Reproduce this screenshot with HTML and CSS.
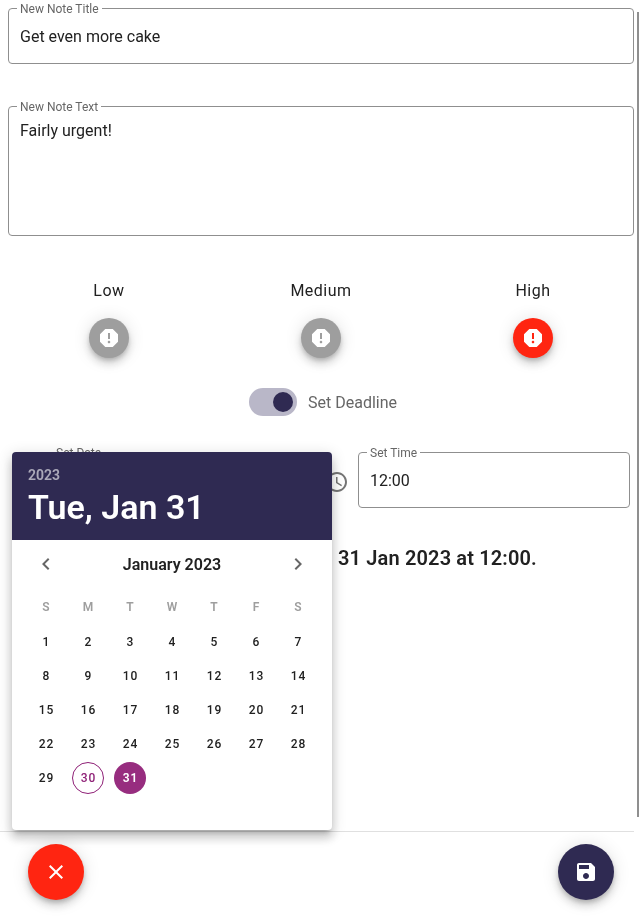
FILE: index.html
```html
<!DOCTYPE html>
<html lang="en">
<head>
<meta charset="utf-8">
<title>New Note</title>
<link rel="stylesheet" href="styles.css">
</head>
<body>
<div class="page">
  <main class="content">
    <div class="field field-title">
      <span class="field-label">New Note Title</span>
      <span class="field-value">Get even more cake</span>
    </div>
    <div class="field field-text">
      <span class="field-label">New Note Text</span>
      <span class="field-value">Fairly urgent!</span>
    </div>

    <div class="priorities">
      <div class="priority">
        <span class="priority-label">Low</span>
        <span class="priority-btn"><svg class="icon-report" viewBox="0 0 24 24"><path d="M15.73 3H8.27L3 8.27v7.46L8.27 21h7.46L21 15.73V8.27L15.73 3zM12 17.3c-.72 0-1.3-.58-1.3-1.3 0-.72.58-1.3 1.3-1.3.72 0 1.3.58 1.3 1.3 0 .72-.58 1.3-1.3 1.3zm1-4.3h-2V7h2v6z"/></svg></span>
      </div>
      <div class="priority">
        <span class="priority-label">Medium</span>
        <span class="priority-btn"><svg class="icon-report" viewBox="0 0 24 24"><path d="M15.73 3H8.27L3 8.27v7.46L8.27 21h7.46L21 15.73V8.27L15.73 3zM12 17.3c-.72 0-1.3-.58-1.3-1.3 0-.72.58-1.3 1.3-1.3.72 0 1.3.58 1.3 1.3 0 .72-.58 1.3-1.3 1.3zm1-4.3h-2V7h2v6z"/></svg></span>
      </div>
      <div class="priority">
        <span class="priority-label">High</span>
        <span class="priority-btn is-active"><svg class="icon-report" viewBox="0 0 24 24"><path d="M15.73 3H8.27L3 8.27v7.46L8.27 21h7.46L21 15.73V8.27L15.73 3zM12 17.3c-.72 0-1.3-.58-1.3-1.3 0-.72.58-1.3 1.3-1.3.72 0 1.3.58 1.3 1.3 0 .72-.58 1.3-1.3 1.3zm1-4.3h-2V7h2v6z"/></svg></span>
      </div>
    </div>

    <div class="deadline-toggle">
      <span class="switch"><span class="switch-thumb"></span></span>
      <span class="switch-label">Set Deadline</span>
    </div>

    <div class="datetime">
      <div class="datetime-group">
        <svg class="icon-muted" viewBox="0 0 24 24"><path d="M20 3h-1V1h-2v2H7V1H5v2H4c-1.1 0-2 .9-2 2v16c0 1.1.9 2 2 2h16c1.1 0 2-.9 2-2V5c0-1.1-.9-2-2-2zm0 18H4V8h16v13z"/></svg>
        <div class="field field-small">
          <span class="field-label">Set Date</span>
        </div>
      </div>
      <div class="datetime-group">
        <svg class="icon-muted" viewBox="0 0 24 24"><path d="M11.99 2C6.47 2 2 6.48 2 12s4.47 10 9.99 10C17.52 22 22 17.52 22 12S17.52 2 11.99 2zM12 20c-4.42 0-8-3.58-8-8s3.58-8 8-8 8 3.58 8 8-3.58 8-8 8zm.5-13H11v6l5.25 3.15.75-1.23-4.5-2.67z"/></svg>
        <div class="field field-small">
          <span class="field-label">Set Time</span>
          <span class="field-value">12:00</span>
        </div>
      </div>
    </div>

    <p class="deadline-text">31 Jan 2023 at 12:00.</p>
  </main>

  <footer class="footer">
    <span class="fab fab-cancel"><svg viewBox="0 0 24 24"><path d="M19 6.41 17.59 5 12 10.59 6.41 5 5 6.41 10.59 12 5 17.59 6.41 19 12 13.41 17.59 19 19 17.59 13.41 12z"/></svg></span>
    <span class="fab fab-save"><svg viewBox="0 0 24 24"><path d="M17 3H5c-1.11 0-2 .9-2 2v14c0 1.1.89 2 2 2h14c1.1 0 2-.9 2-2V7l-4-4zm-5 16c-1.66 0-3-1.34-3-3s1.34-3 3-3 3 1.34 3 3-1.34 3-3 3zm3-10H5V5h10v4z"/></svg></span>
  </footer>

  <div class="scrollbar"></div>

  <section class="picker">
    <header class="picker-head">
      <div class="picker-year">2023</div>
      <div class="picker-date">Tue, Jan 31</div>
    </header>
    <div class="picker-nav">
      <svg class="chevron" viewBox="0 0 24 24"><path d="M15.41 7.41 14 6l-6 6 6 6 1.41-1.41L10.83 12z"/></svg>
      <span class="picker-month">January 2023</span>
      <svg class="chevron" viewBox="0 0 24 24"><path d="M10 6 8.59 7.41 13.17 12l-4.58 4.59L10 18l6-6z"/></svg>
    </div>
    <div class="weekdays">
      <span>S</span><span>M</span><span>T</span><span>W</span><span>T</span><span>F</span><span>S</span>
    </div>
    <div class="days">
      <span class="day">1</span><span class="day">2</span><span class="day">3</span><span class="day">4</span><span class="day">5</span><span class="day">6</span><span class="day">7</span>
      <span class="day">8</span><span class="day">9</span><span class="day">10</span><span class="day">11</span><span class="day">12</span><span class="day">13</span><span class="day">14</span>
      <span class="day">15</span><span class="day">16</span><span class="day">17</span><span class="day">18</span><span class="day">19</span><span class="day">20</span><span class="day">21</span>
      <span class="day">22</span><span class="day">23</span><span class="day">24</span><span class="day">25</span><span class="day">26</span><span class="day">27</span><span class="day">28</span>
      <span class="day">29</span><span class="day day-today">30</span><span class="day day-selected">31</span>
    </div>
  </section>
</div>
</body>
</html>
```

FILE: styles.css
```css
* { box-sizing: border-box; }

html, body { margin: 0; padding: 0; }

body {
  background: #fff;
  font-family: Roboto, "Liberation Sans", sans-serif;
  color: #212121;
  overflow: hidden;
}

.page {
  position: relative;
  width: 642px;
  height: 920px;
  overflow: hidden;
  will-change: transform;
}

.content {
  height: 831px;
  padding-top: 8px;
}

.field {
  position: relative;
  display: flex;
  border: 1px solid #8f8f8f;
  border-radius: 4px;
  padding: 2px 11px 0;
  font-size: 16px;
  line-height: 24px;
}

.field-title {
  width: 626px;
  height: 56px;
  margin-left: 8px;
  align-items: center;
}

.field-text {
  width: 626px;
  height: 130px;
  margin: 42px 0 0 8px;
  padding-top: 12px;
  align-items: flex-start;
}

.field-small {
  width: 272px;
  height: 56px;
  align-items: center;
}

.field-label {
  position: absolute;
  left: 8px;
  top: -7px;
  padding: 0 3px;
  background: #fff;
  font-size: 12px;
  line-height: 14px;
  color: #666;
}

.field-value { color: #212121; }

.priorities {
  display: grid;
  grid-template-columns: repeat(3, 212px);
  margin: 44px 0 0 3px;
}

.priority {
  display: flex;
  flex-direction: column;
  align-items: center;
}

.priority-label {
  font-size: 16px;
  line-height: 22px;
  letter-spacing: 0.5px;
  color: #212121;
}

.priority-btn {
  display: flex;
  align-items: center;
  justify-content: center;
  width: 40px;
  height: 40px;
  margin-top: 16px;
  border-radius: 50%;
  background: #9e9e9e;
  box-shadow: 0 3px 5px -1px rgba(0,0,0,.2), 0 6px 10px 0 rgba(0,0,0,.14), 0 1px 18px 0 rgba(0,0,0,.12);
}

.priority-btn.is-active { background: #ff2511; }

.icon-report { width: 24px; height: 24px; fill: #fff; }

.deadline-toggle {
  display: flex;
  align-items: center;
  justify-content: center;
  gap: 11px;
  margin-top: 30px;
  padding-left: 4px;
  height: 28px;
}

.switch {
  display: flex;
  align-items: center;
  justify-content: flex-end;
  width: 48px;
  height: 28px;
  padding-right: 4px;
  border-radius: 14px;
  background: #b9b7c8;
}

.switch-thumb {
  width: 20px;
  height: 20px;
  border-radius: 50%;
  background: #2f2a52;
}

.switch-label {
  font-size: 16px;
  color: #666;
}

.datetime {
  display: flex;
  margin: 36px 0 0 12px;
  width: 618px;
  gap: 10px;
}

.datetime-group {
  display: flex;
  align-items: center;
  gap: 9px;
  flex: 1;
}

.icon-muted {
  flex: none;
  width: 24px;
  height: 24px;
  margin-top: 4px;
  margin-left: -1px;
  fill: #757575;
}

.deadline-text {
  margin: 38px 0 0;
  padding-left: 338px;
  font-size: 20px;
  font-weight: 600;
  line-height: 24px;
  letter-spacing: 0.15px;
  color: #212121;
}

.footer {
  display: flex;
  justify-content: space-between;
  width: 634px;
  height: 89px;
  padding: 12px 20px 0 28px;
  border-top: 1px solid #e0e0e0;
}

.fab {
  display: flex;
  align-items: center;
  justify-content: center;
  width: 56px;
  height: 56px;
  border-radius: 50%;
  box-shadow: 0 3px 5px -1px rgba(0,0,0,.2), 0 6px 10px 0 rgba(0,0,0,.14), 0 1px 18px 0 rgba(0,0,0,.12);
}

.fab svg { width: 24px; height: 24px; fill: #fff; }

.fab-cancel { background: #ff2511; }
.fab-save { background: #2f2a52; }

.scrollbar {
  position: absolute;
  left: 637px;
  top: 12px;
  width: 2px;
  height: 805px;
  background: #8f8f8f;
}

.picker {
  position: absolute;
  left: 12px;
  top: 452px;
  width: 320px;
  height: 378px;
  border-radius: 4px;
  overflow: hidden;
  background: #fff;
  box-shadow: 0 5px 5px -3px rgba(0,0,0,.2), 0 8px 10px 1px rgba(0,0,0,.14), 0 3px 14px 2px rgba(0,0,0,.12);
}

.picker-head {
  height: 88px;
  padding: 14px 16px 0;
  background: #2f2a52;
  color: #fff;
}

.picker-year {
  font-size: 14px;
  font-weight: 600;
  line-height: 18px;
  color: rgba(255,255,255,.6);
}

.picker-date {
  margin-top: 3px;
  font-size: 34px;
  font-weight: 600;
  line-height: 40px;
}

.picker-nav {
  display: flex;
  align-items: center;
  justify-content: space-between;
  height: 24px;
  margin-top: 12px;
  padding: 0 22px;
}

.chevron { width: 24px; height: 24px; fill: #666; }

.picker-month {
  font-size: 16px;
  font-weight: 600;
  color: #212121;
}

.weekdays, .days {
  display: grid;
  grid-template-columns: repeat(7, 42px);
  justify-items: center;
  align-items: center;
  padding-left: 13px;
}

.weekdays {
  margin-top: 19px;
  height: 24px;
  font-size: 12px;
  font-weight: 600;
  color: #9e9e9e;
}

.days {
  margin-top: 6px;
  grid-auto-rows: 34px;
  font-size: 12px;
  font-weight: 500;
  letter-spacing: 1px;
  text-indent: 1px;
  color: #212121;
}

.day {
  display: flex;
  align-items: center;
  justify-content: center;
  width: 32px;
  height: 32px;
  border-radius: 50%;
}

.day-today {
  border: 1px solid #8e1f76;
  color: #8e1f76;
  font-weight: 500;
}

.day-selected {
  background: #972d7f;
  color: #fff;
  font-weight: 600;
}
```
